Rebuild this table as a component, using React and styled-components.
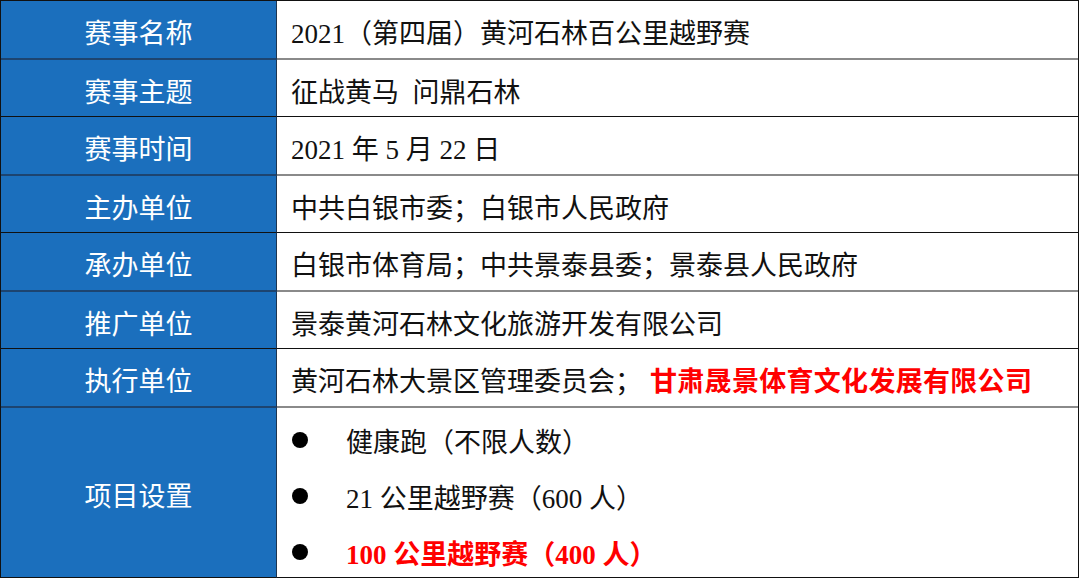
import styled, { createGlobalStyle } from "styled-components";

const GlobalStyle = createGlobalStyle`
  * {
    box-sizing: border-box;
    margin: 0;
    padding: 0;
  }

  body {
    width: 1080px;
    height: 580px;
    overflow: hidden;
    background: #fff;
    font-family: "Liberation Serif", "Noto Sans CJK SC", serif;
  }
`;

const rows = [
  { label: "赛事名称", value: "2021（第四届）黄河石林百公里越野赛", line: "gray" },
  { label: "赛事主题", value: "征战黄马  问鼎石林", line: "black" },
  { label: "赛事时间", value: "2021 年 5 月 22 日", line: "gray" },
  { label: "主办单位", value: "中共白银市委；白银市人民政府", line: "black" },
  { label: "承办单位", value: "白银市体育局；中共景泰县委；景泰县人民政府", line: "gray" },
  { label: "推广单位", value: "景泰黄河石林文化旅游开发有限公司", line: "black" },
  {
    label: "执行单位",
    value: "黄河石林大景区管理委员会；",
    accent: "甘肃晟景体育文化发展有限公司",
    line: "gray",
  },
];

const events = [
  { text: "健康跑（不限人数）" },
  { text: "21 公里越野赛（600 人）" },
  { text: "100 公里越野赛（400 人）", hot: true },
];

const App = () => {
  return (
    <>
      <GlobalStyle />
      <Table>
        {rows.map((r) => (
          <Row key={r.label} $line={r.line}>
            <HeadCell $line={r.line}>{r.label}</HeadCell>
            <ValueCell $line={r.line}>
              {r.value}
              {r.accent && <Accent>{r.accent}</Accent>}
            </ValueCell>
          </Row>
        ))}
        <Row $line="black" $tall>
          <HeadCell $line="black">项目设置</HeadCell>
          <ListCell>
            {events.map((e) => (
              <Item key={e.text} $hot={e.hot}>
                <Bullet />
                {e.text}
              </Item>
            ))}
          </ListCell>
        </Row>
      </Table>
    </>
  );
};

const Table = styled.div`
  width: 1079px;
  border-top: 1px solid #111;
  border-left: 1px solid #111;
  border-right: 1px solid #111;
  display: flex;
  flex-direction: column;
`;

const Row = styled.div`
  display: grid;
  grid-template-columns: 276px 1fr;
  height: ${(p) => (p.$tall ? "170px" : p.$line === "gray" ? "59px" : "57px")};
`;

const HeadCell = styled.div`
  background: #1b6fbd;
  color: #fff;
  font-size: 27px;
  display: flex;
  align-items: center;
  justify-content: center;
  padding-top: 4px;
  border-right: 1px solid #1d3550;
  border-bottom: ${(p) => (p.$line === "gray" ? "2px solid #1d4470" : "1px solid #111")};
`;

const ValueCell = styled.div`
  color: #111;
  font-size: 27px;
  display: flex;
  align-items: center;
  padding: 4px 0 0 14px;
  white-space: pre;
  border-bottom: ${(p) => (p.$line === "gray" ? "2px solid #8a8a8a" : "1px solid #111")};
`;

const Accent = styled.span`
  color: #f00;
  font-weight: 700;
  margin-left: 8px;
  letter-spacing: 0.3px;
`;

const ListCell = styled.div`
  display: flex;
  flex-direction: column;
  justify-content: flex-end;
  overflow: hidden;
  border-bottom: 1px solid #111;
`;

const Item = styled.div`
  height: 56px;
  flex-shrink: 0;
  display: flex;
  align-items: center;
  padding: 6px 0 0 15px;
  font-size: 27px;
  color: ${(p) => (p.$hot ? "#f00" : "#111")};
  font-weight: ${(p) => (p.$hot ? 700 : 400)};
`;

const Bullet = styled.span`
  width: 16px;
  height: 16px;
  border-radius: 50%;
  background: #000;
  margin-right: 38px;
  flex-shrink: 0;
`;

export default App;
